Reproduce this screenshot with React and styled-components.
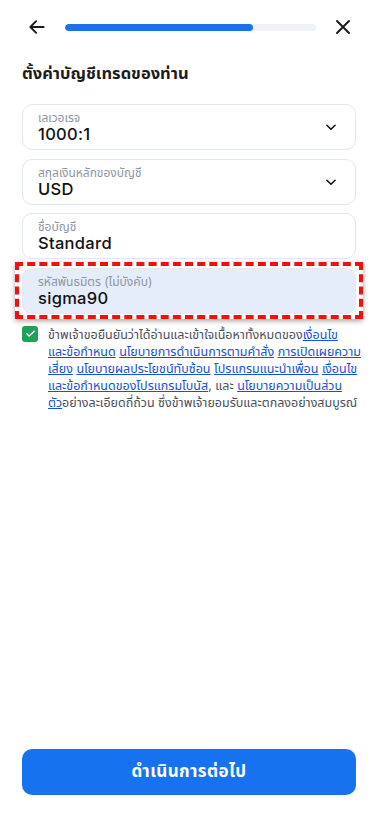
import React from "react";
import styled, { createGlobalStyle } from "styled-components";

const Global = createGlobalStyle`
  html, body { margin: 0; padding: 0; background: #fff; }
  body { font-family: Inter, "Noto Sans", "Noto Sans Thai", "DejaVu Sans", sans-serif; color: #111; }
  * { box-sizing: border-box; }
`;

const Page = styled.div`
  min-height: 100vh;
  display: flex;
  flex-direction: column;
  padding: 0 22px 24px 22px;
`;

const Header = styled.div`
  height: 54px;
  display: flex;
  align-items: center;
`;

const IconBtn = styled.button`
  flex: none;
  width: 30px;
  height: 32px;
  padding: 0;
  border: 0;
  background: none;
  display: flex;
  align-items: center;
  justify-content: center;
  margin-right: ${(p) => p.$mr || 0}px;
`;

const Track = styled.div`
  flex: 1;
  height: 7px;
  border-radius: 4px;
  background: #eff3f8;
  margin: 0 12px 0 13px;
  overflow: hidden;
`;

const Fill = styled.div`
  height: 100%;
  border-radius: 4px;
  background: #1a72ea;
`;

const Title = styled.h1`
  margin: 8px 0 20px 0;
  font-size: 16.5px;
  font-weight: 700;
  color: #1c1c1c;
  line-height: 22px;
`;

const Fields = styled.div`
  display: flex;
  flex-direction: column;
  gap: 8.5px;
`;

const FieldWrap = styled.div`
  position: relative;
`;

const Field = styled.div`
  height: 46px;
  border: 1px solid #e1e6ef;
  border-radius: 10px;
  background: ${(p) => (p.$hl ? "#e6edfa" : "#fff")};
  display: flex;
  align-items: center;
  padding: 0 17px 0 15px;
`;

const FieldText = styled.div`
  flex: 1;
  display: flex;
  flex-direction: column;
`;

const Label = styled.span`
  font-size: 12px;
  line-height: 15px;
  color: #8d95a5;
`;

const Value = styled.span`
  font-size: 16.5px;
  line-height: 19px;
  font-weight: 500;
  letter-spacing: 0.3px;
  color: #111;
`;

const Highlight = styled.div`
  position: absolute;
  left: -7px;
  right: -7px;
  top: -6px;
  bottom: -5px;
  border: 4px dashed #f01010;
  box-shadow: 0 2px 5px rgba(0, 0, 0, 0.35);
  pointer-events: none;
`;

const Consent = styled.div`
  display: flex;
  gap: 10px;
  margin-top: 12px;
`;

const Check = styled.div`
  flex: none;
  width: 16px;
  height: 16px;
  border-radius: 3px;
  background: #22a05a;
  display: flex;
  align-items: center;
  justify-content: center;
`;

const ConsentText = styled.p`
  margin: 0;
  font-size: 12.5px;
  line-height: 17px;
  white-space: nowrap;
  color: #4a4f5a;
`;

const A = styled.a`
  color: #1452d6;
  text-decoration: underline;
`;

const Spacer = styled.div`
  flex: 1;
`;

const Primary = styled.button`
  height: 46px;
  border: 0;
  border-radius: 10px;
  background: #1672ef;
  color: #fff;
  font-family: inherit;
  font-size: 17px;
  letter-spacing: 0.4px;
  font-weight: 700;
`;

const Chevron = () => (
  <svg width="14" height="14" viewBox="0 0 24 24" fill="none" stroke="#111" strokeWidth="2.6" strokeLinecap="round" strokeLinejoin="round">
    <path d="M5 9l7 7 7-7" />
  </svg>
);

const fields = [
  { label: "เลเวอเรจ", value: "1000:1", select: true },
  { label: "สกุลเงินหลักของบัญชี", value: "USD", select: true },
  { label: "ชื่อบัญชี", value: "Standard" },
  { label: "รหัสพันธมิตร (ไม่บังคับ)", value: "sigma90", hl: true },
];

export default function App() {
  return (
    <>
      <Global />
      <Page>
        <Header>
          <IconBtn aria-label="back">
            <svg width="20" height="20" viewBox="0 0 24 24" fill="none" stroke="#1b1b1b" strokeWidth="2.3" strokeLinecap="round" strokeLinejoin="round">
              <path d="M20 12H4M11 5l-7 7 7 7" />
            </svg>
          </IconBtn>
          <Track>
            <Fill style={{ width: "75%" }} />
          </Track>
          <IconBtn aria-label="close" $mr={-2}>
            <svg width="18" height="18" viewBox="0 0 24 24" fill="none" stroke="#1b1b1b" strokeWidth="2.6" strokeLinecap="round">
              <path d="M4 4l16 16M20 4L4 20" />
            </svg>
          </IconBtn>
        </Header>
        <Title>ตั้งค่าบัญชีเทรดของท่าน</Title>
        <Fields>
          {fields.map((f) => (
            <FieldWrap key={f.label}>
              <Field $hl={f.hl}>
                <FieldText>
                  <Label>{f.label}</Label>
                  <Value>{f.value}</Value>
                </FieldText>
                {f.select && <Chevron />}
              </Field>
              {f.hl && <Highlight />}
            </FieldWrap>
          ))}
        </Fields>
        <Consent>
          <Check>
            <svg width="11" height="11" viewBox="0 0 24 24" fill="none" stroke="#fff" strokeWidth="3.2" strokeLinecap="round" strokeLinejoin="round">
              <path d="M4 12.5l5 5L20 7" />
            </svg>
          </Check>
          <ConsentText>
            ข้าพเจ้าขอยืนยันว่าได้อ่านและเข้าใจเนื้อหาทั้งหมดของ<A href="#">เงื่อนไข<br />และข้อกำหนด</A>{" "}
            <A href="#">นโยบายการดำเนินการตามคำสั่ง</A> <A href="#">การเปิดเผยความ<br />เสี่ยง</A>{" "}
            <A href="#">นโยบายผลประโยชน์ทับซ้อน</A> <A href="#">โปรแกรมแนะนำเพื่อน</A>{" "}
            <A href="#">เงื่อนไข<br />และข้อกำหนดของโปรแกรมโบนัส</A>, และ <A href="#">นโยบายความเป็นส่วน<br />ตัว</A>
            อย่างละเอียดถี่ถ้วน ซึ่งข้าพเจ้ายอมรับและตกลงอย่างสมบูรณ์
          </ConsentText>
        </Consent>
        <Spacer />
        <Primary>ดำเนินการต่อไป</Primary>
      </Page>
    </>
  );
}
